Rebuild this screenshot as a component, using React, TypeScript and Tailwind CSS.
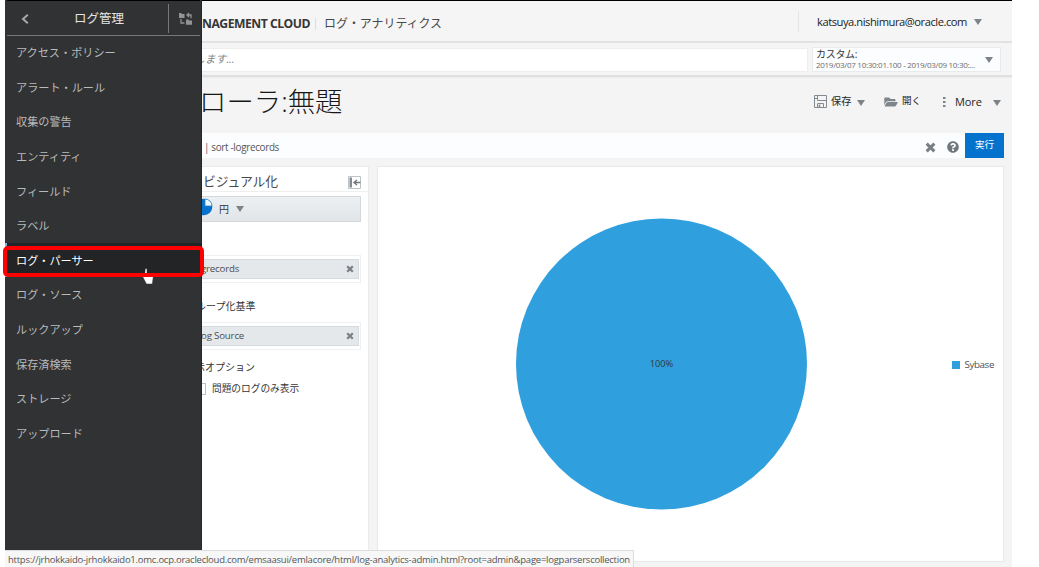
import { FaFolderOpen, FaQuestionCircle } from "react-icons/fa";
import { clsx } from "clsx";

const MENU_ITEMS = [
  "アクセス・ポリシー",
  "アラート・ルール",
  "収集の警告",
  "エンティティ",
  "フィールド",
  "ラベル",
  "ログ・パーサー",
  "ログ・ソース",
  "ルックアップ",
  "保存済検索",
  "ストレージ",
  "アップロード",
];

const ACTIVE_ITEM = "ログ・パーサー";

function Caret({ className }: { className?: string }) {
  return (
    <svg viewBox="0 0 8 6" className={clsx("h-[6px] w-[8px] shrink-0", className)}>
      <path d="M0 0h8L4 6z" fill="#7d8388" />
    </svg>
  );
}

function CloseMark({ className }: { className?: string }) {
  return (
    <svg viewBox="0 0 10 10" className={clsx("shrink-0", className)}>
      <path d="M1.5 1.5l7 7M8.5 1.5l-7 7" stroke="#7a7f84" strokeWidth="2.8" />
    </svg>
  );
}

function Sidebar() {
  return (
    <nav className="relative z-10 h-[550px] w-[197px] shrink-0 border-r border-[#242527] bg-[#313234]">
      <div className="mr-px ml-[2px] flex h-[36px] border-t border-black border-b border-b-[#77787a]">
        <div className="flex w-[36px] items-center justify-center">
          <svg viewBox="0 0 8 10" className="mt-[2px] h-[10px] w-[8px]">
            <path d="M6.8 0.8L2 5l4.8 4.2" fill="none" stroke="#a6a8aa" strokeWidth="2" />
          </svg>
        </div>
        <div className="flex-1 pt-[8px] pr-[13px] text-center text-[12.5px] leading-[20px] text-[#e4e4e4]">
          ログ管理
        </div>
        <div className="mt-[3px] mb-[2px] flex w-[32px] items-center border-l border-[#77787a] pl-[9px]">
          <svg viewBox="0 0 15 15" className="h-[15px] w-[15px]" fill="#919395">
            <path d="M1 2h2.2l.8 1h2.5v4H1zM8 8.5h2.5l.8 1H14v4.3H8z" />
            <path d="M3 8v4h3.5M9 4h4v3.2M11 2L9 4l2 2" fill="none" stroke="#919395" strokeWidth="1.3" />
          </svg>
        </div>
      </div>
      <ul className="-mt-px">
        {MENU_ITEMS.map((item) => (
          <li
            key={item}
            className={clsx(
              "flex h-[34.65px] items-center border-l-2 pt-[2px] pl-[9px] text-[11.15px] whitespace-nowrap",
              item === ACTIVE_ITEM
                ? "border-[#79b5ec] bg-[#232426] text-white"
                : "border-transparent text-[#b9babb]",
            )}
          >
            {item}
          </li>
        ))}
      </ul>
      <svg viewBox="0 0 13 18" className="absolute top-[268px] left-[137px] h-[18px] w-[13px]">
        <path
          d="M3.2 1.3c0-1 1.8-1 1.8 0V6.5l5 1c1 .3 1.3 1 1.2 2l-.9 6.5H4.5L1.2 9.8c-.6-1 .6-1.8 1.4-1z"
          fill="#fff"
          stroke="#333"
          strokeWidth="0.5"
        />
      </svg>
      <div className="absolute top-[246px] -left-[2px] h-[31px] w-[201px] rounded-[5px] border-4 border-[#fe0000]" />
    </nav>
  );
}

function Header() {
  return (
    <header className="flex h-[43px] items-center border-t border-black border-b-2 border-b-[#e2e2e2] bg-[#f5f5f5]">
      <div className="w-[109px] text-[12.2px] font-bold tracking-[-0.5px] whitespace-nowrap text-[#363636]">
        <span className="inline-block pt-[6px]">NAGEMENT CLOUD</span>
      </div>
      <div className="mt-[6px] ml-[4px] h-[12px] border-l border-[#dedede]" />
      <div className="pt-[5px] pl-[8px] text-[11.95px] text-[#484848]">ログ・アナリティクス</div>
      <div className="mr-[18px] ml-auto h-[21px] border-l border-[#e5e5e5]" />
      <div className="flex w-[195px] items-center pt-[3px] text-[11.2px] text-[#222]">
        <span className="w-[150px] tracking-[-0.47px] whitespace-nowrap">katsuya.nishimura@oracle.com</span>
        <Caret className="ml-[7px]" />
      </div>
    </header>
  );
}

function SearchStrip() {
  return (
    <div className="flex h-[33px] items-center gap-[4px] border-b border-[#dedede] bg-[#f5f5f5] pr-[11px] pt-px shadow-[0_1px_2px_#d8d8d8]">
      <div className="flex h-[24px] flex-1 items-center border border-[#eee] border-l-0 bg-white text-[10.8px] text-[#858585] italic">
        <span className="-ml-[8px]">します...</span>
      </div>
      <div className="flex h-[25px] w-[189px] items-center border border-[#e7ebee] bg-[#fcfdfe] pl-[3px]">
        <div className="w-[168px] whitespace-nowrap">
          <div className="-mt-[2px] text-[10px] leading-[11px] tracking-[-0.3px] text-[#353535]">カスタム:</div>
          <div className="text-[8px] leading-[9px] tracking-[-0.29px] text-[#6c6c6c]">
            2019/03/07 10:30:01.100 - 2019/03/09 10:30:...
          </div>
        </div>
        <Caret className="ml-[1px]" />
      </div>
    </div>
  );
}

function TitleBar() {
  return (
    <div className="flex h-[57px] items-center pb-[6px]">
      <h1 className="-ml-[3px] text-[27.4px] leading-[50px] font-light whitespace-nowrap text-[#171717]">
        ローラ:無題
      </h1>
      <div className="mr-[10px] ml-auto flex w-[188px] items-center text-[10.2px] whitespace-nowrap text-[#242424]">
        <svg viewBox="0 0 13 13" className="h-[13px] w-[13px]" fill="none" stroke="#838a90">
          <path d="M.5.5h12v12H.5zM3.5.5v5h9M3.5 12.5v-4h6v4M.5 3.5h3" />
          <path d="M5.5 9.5v3" strokeWidth="1.6" />
        </svg>
        <span className="ml-[4px] w-[20px]">保存</span>
        <Caret className="mt-[2px] ml-[6px]" />
        <FaFolderOpen className="ml-[19px] h-[12px] w-[14px] text-[#7e868c]" />
        <span className="ml-[4px] w-[19px] text-[9.6px]">開く</span>
        <svg viewBox="0 0 3 10" className="ml-[22px] h-[10px] w-[3px]" fill="#7d8388">
          <path d="M0 0h2.5v2H0zM0 4h2.5v2H0zM0 8h2.5v2H0z" />
        </svg>
        <span className="mt-[2px] ml-[9px] text-[11px] tracking-[-0.1px]">More</span>
        <Caret className="mt-[2px] mr-px ml-auto" />
      </div>
    </div>
  );
}

function QueryBar() {
  return (
    <div className="mr-[8px] flex h-[25px] items-center bg-[#fcfdfe]">
      <span className="pt-[3px] pl-[2px] text-[9.9px] tracking-[-0.32px] text-[#565656]">| sort -logrecords</span>
      <CloseMark className="mt-[3px] ml-auto h-[11px] w-[11px]" />
      <FaQuestionCircle className="mt-[2px] ml-[11px] h-[12px] w-[12px] text-[#70777d]" />
      <button className="ml-[6px] h-[25px] w-[39px] bg-[#0572ce] text-[9.5px] text-white">実行</button>
    </div>
  );
}

function Chip({ label, className }: { label: string; className?: string }) {
  return (
    <div className={clsx("h-[28px] w-[159px] border border-l-0 border-[#edf1f3] py-[3px] pr-[1px]", className)}>
      <div className="flex h-[20px] items-center justify-between border border-l-0 border-[#d6dbdf] bg-[#e4e8eb] pr-[4px] text-[9.7px] tracking-[-0.18px] text-[#4d4d4d]">
        <span className="-ml-[1px] whitespace-nowrap">{label}</span>
        <CloseMark className="h-[8px] w-[8px]" />
      </div>
    </div>
  );
}

function VisualizePanel() {
  return (
    <section className="h-[396px] w-[167px] shrink-0 overflow-hidden border-t border-r border-[#ebebeb] bg-white text-[#353535]">
      <div className="flex h-[25px] items-center border-b border-[#eee] pr-[7px]">
        <h2 className="pt-[5px] pl-[1px] text-[12.8px] tracking-[-0.1px] text-[#484848]">ビジュアル化</h2>
        <svg viewBox="0 0 13 13" className="mt-[6px] ml-auto h-[13px] w-[13px]" fill="none">
          <path d="M.5.5h12v12H.5z" stroke="#bcc4c5" />
          <path d="M1.5 1.5h2.5v10H1.5z" fill="#858b90" />
          <path d="M12.5 6.5h-6M9 4L6 6.5 9 9" stroke="#70777d" strokeWidth="1.4" />
        </svg>
      </div>
      <div className="mt-[4px] flex h-[26px] w-[159px] items-center rounded-r-[1px] border border-l-0 border-[#d3d8dc] bg-linear-to-b from-[#edf0f2] to-[#e1e5e8]">
        <svg viewBox="0 0 18 18" className="mb-[4px] -ml-[7px] h-[18px] w-[18px]">
          <circle cx="9" cy="9" r="8.3" fill="#0572ce" />
          <path d="M10 1v7h7A7 7 0 0010 1z" fill="#f2f7fa" stroke="#2a83cd" strokeWidth="0.8" />
        </svg>
        <span className="ml-[6px] text-[10px]">円</span>
        <Caret className="ml-[7px]" />
      </div>
      <Chip label="grecords" className="mt-[33px]" />
      <div className="mt-[15px] -ml-[6px] text-[10px] leading-[16px] whitespace-nowrap">ループ化基準</div>
      <Chip label="og Source" className="mt-[8px]" />
      <div className="mt-[9px] -ml-[7px] text-[10px] leading-[16px] whitespace-nowrap">示オプション</div>
      <div className="mt-[6px] flex items-center text-[9.7px] leading-[16px] whitespace-nowrap">
        <span className="h-[12px] w-[4px] border border-l-0 border-[#b9c1c8]" />
        <span className="ml-[6px]">問題のログのみ表示</span>
      </div>
    </section>
  );
}

function PieChartPanel() {
  return (
    <section className="relative ml-[8px] h-[396px] w-[627px] border border-[#e6eaeb] bg-white">
      <svg viewBox="0 0 625 394" className="h-[394px] w-[625px]">
        <circle cx="283.5" cy="197" r="145.5" fill="#309fdd" />
        <text x="283.5" y="199.5" textAnchor="middle" fontSize="9.3" fill="#30383d">
          100%
        </text>
      </svg>
      <div className="absolute top-[190px] right-[9px] flex items-center gap-[5px] text-[9.8px] leading-[16px] tracking-[-0.4px] text-[#505050]">
        <span className="h-[8px] w-[8px] bg-[#309fdd]" />
        Sybase
      </div>
    </section>
  );
}

export default function App() {
  return (
    <div className="h-[567px] w-[1039px] overflow-hidden bg-white font-['Open_Sans','Noto_Sans_CJK_JP',sans-serif]">
      <div className="relative ml-[5px] flex h-[567px] w-[1007px] bg-[#f4f4f4]">
        <Sidebar />
        <main className="w-[810px] overflow-hidden">
          <Header />
          <SearchStrip />
          <TitleBar />
          <QueryBar />
          <div className="mt-[8px] flex">
            <VisualizePanel />
            <PieChartPanel />
          </div>
        </main>
        <div className="absolute top-[550px] left-0 z-20 h-[17px] w-[629px] border-t border-r border-[#dcdcdc] bg-[#f7f7f7] pl-[3px] text-[9.5px] leading-[17px] tracking-[-0.245px] whitespace-nowrap text-[#555]">
          https://jrhokkaido-jrhokkaido1.omc.ocp.oraclecloud.com/emsaasui/emlacore/html/log-analytics-admin.html?root=admin&page=logparserscollection
        </div>
      </div>
    </div>
  );
}
